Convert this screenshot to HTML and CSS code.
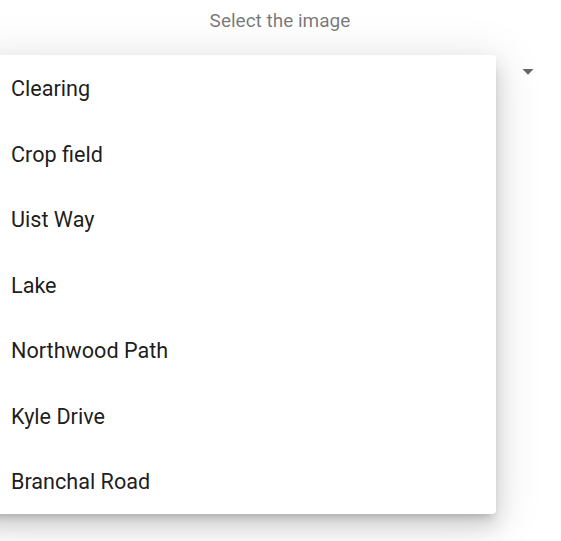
FILE: index.html
```html
<!DOCTYPE html>
<html>
<head>
<meta charset="utf-8">
<link rel="stylesheet" href="styles.css">
</head>
<body>
<div class="field">
  <div class="label">Select the image</div>
  <div class="select-row">
    <svg class="arrow" width="12" height="6" viewBox="0 0 12 6"><path d="M0.5 0 L11.5 0 L6 5.8 Z" fill="#666"/></svg>
  </div>
</div>
<div class="menu">
  <ul class="list">
    <li class="item">Clearing</li>
    <li class="item">Crop field</li>
    <li class="item">Uist Way</li>
    <li class="item">Lake</li>
    <li class="item">Northwood Path</li>
    <li class="item">Kyle Drive</li>
    <li class="item">Branchal Road</li>
  </ul>
</div>
</body>
</html>
```

FILE: styles.css
```css
html, body {
  margin: 0;
  padding: 0;
  background: #fff;
  font-family: Roboto, "Liberation Sans", Arial, sans-serif;
  width: 561px;
  height: 541px;
  overflow: hidden;
}
.field {
  display: flex;
  flex-direction: column;
}
.label {
  margin-top: 10px;
  text-align: center;
  font-size: 19px;
  line-height: 22px;
  color: rgba(0, 0, 0, 0.54);
  padding-right: 1px;
}
.select-row {
  display: flex;
  justify-content: flex-end;
  padding-top: 37px;
  padding-right: 27px;
}
.arrow {
  display: block;
}
.menu {
  position: absolute;
  left: -20px;
  top: 55px;
  width: 516px;
  background: #fff;
  border-radius: 4px;
  box-shadow: 0 6px 8px -4px rgba(0,0,0,0.2), 0 12px 20px 2px rgba(0,0,0,0.12), 0 6px 44px 6px rgba(0,0,0,0.10);
}
.list {
  list-style: none;
  margin: 0;
  padding: 0;
  display: flex;
  flex-direction: column;
}
.item {
  box-sizing: border-box;
  height: 65.5px;
  padding: 22px 0 0 31px;
  font-size: 21.6px;
  line-height: 24px;
  color: rgba(0, 0, 0, 0.9);
}
```
